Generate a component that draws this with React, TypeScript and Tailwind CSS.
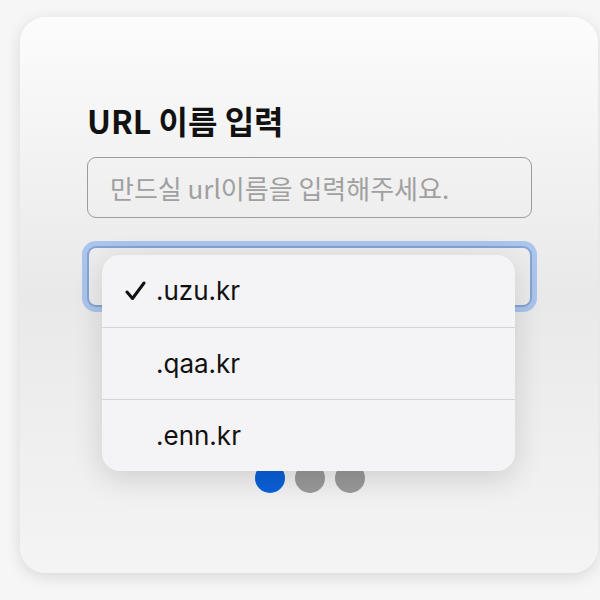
import React from "react";

const options = [".uzu.kr", ".qaa.kr", ".enn.kr"];

const UrlNameForm: React.FC = () => {
  const selected = 0;

  return (
    <div className="min-h-[600px] w-[600px] bg-[#f6f6f6] pt-[17px] pl-[20px]">
      <div
        className="h-[556px] w-[578px] rounded-[26px] bg-gradient-to-b from-[#fcfcfc] via-[#e9e9e9] to-[#f4f4f4] pt-[83px] pl-[67px] shadow-[0_4px_16px_rgba(0,0,0,0.12)]"
        style={{ fontFamily: '"Noto Sans CJK KR", "Noto Sans", sans-serif' }}
      >
        <h1 className="text-[32px] font-bold leading-[40px] text-[#111]">
          URL 이름 입력
        </h1>

        <input
          type="text"
          placeholder="만드실 url이름을 입력해주세요."
          className="mt-[17px] block h-[61px] w-[445px] rounded-[9px] border border-[#9c9c9c] bg-transparent pl-[22px] text-[26px] text-[#333] placeholder:text-[#a0a0a0] outline-none"
        />

        <div className="relative mt-[28px] w-[445px]">
          <div className="h-[61px] w-[445px] rounded-[9px] border-2 border-[#86a3d4] bg-[#ececec] shadow-[0_0_0_5px_#aac4eb]" />

          {/* open dropdown menu */}
          <div
            className="absolute left-[15px] top-[9px] z-10 w-[413px] overflow-hidden rounded-[18px] bg-[#f4f4f6] shadow-[0_8px_30px_rgba(0,0,0,0.14)]"
            style={{ fontFamily: 'Inter, "Liberation Sans", sans-serif' }}
          >
            {options.map((opt, i) => (
              <div
                key={opt}
                className={`flex h-[72px] items-center ${
                  i > 0 ? "border-t border-[#d6d6da]" : ""
                }`}
              >
                <div className="flex w-[54px] justify-end pr-[10px]">
                  {i === selected && (
                    <svg width="21" height="20" viewBox="0 0 21 20" fill="none">
                      <path
                        d="M2 11 L7.5 17.5 L19 2"
                        stroke="#111"
                        strokeWidth="3"
                        strokeLinecap="round"
                        strokeLinejoin="round"
                      />
                    </svg>
                  )}
                </div>
                <span className="text-[26px] leading-none text-[#111]">{opt}</span>
              </div>
            ))}
          </div>
        </div>

        <div className="mt-[156px] flex w-[445px] justify-center gap-[10px]">
          <span className="h-[30px] w-[30px] rounded-full bg-[#0a5fd8]" />
          <span className="h-[30px] w-[30px] rounded-full bg-[#999999]" />
          <span className="h-[30px] w-[30px] rounded-full bg-[#999999]" />
        </div>
      </div>
    </div>
  );
};

export default function App() {
  return <UrlNameForm />;
}
